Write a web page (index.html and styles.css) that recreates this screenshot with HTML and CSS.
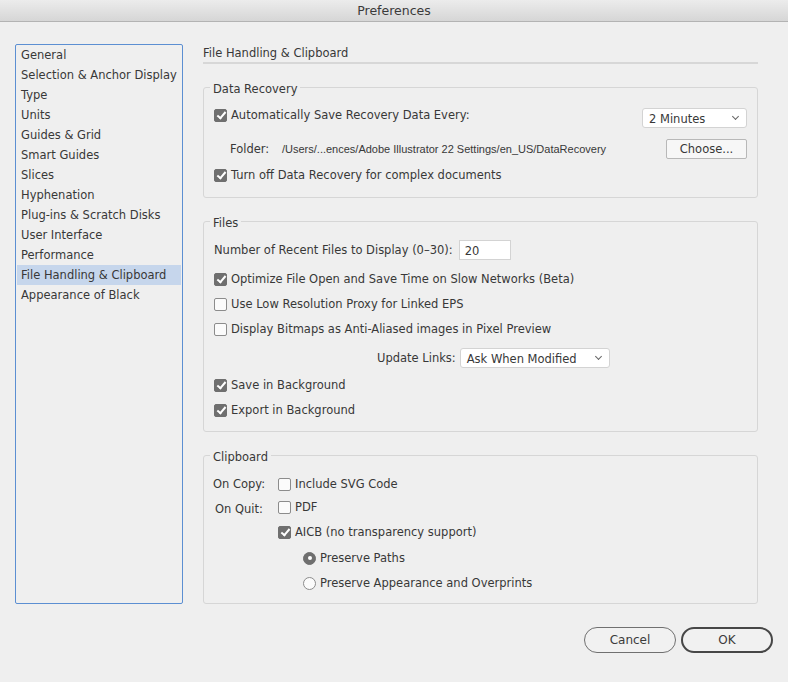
FILE: index.html
```html
<!DOCTYPE html>
<html lang="en">
<head>
    <meta charset="UTF-8">
    <title>Preferences</title>
    <link rel="stylesheet" href="styles.css">
</head>
<body>
    <div class="titlebar">Preferences</div>

    <div class="window">
        <ul class="nav">
            <li>General</li>
            <li>Selection &amp; Anchor Display</li>
            <li>Type</li>
            <li>Units</li>
            <li>Guides &amp; Grid</li>
            <li>Smart Guides</li>
            <li>Slices</li>
            <li>Hyphenation</li>
            <li>Plug-ins &amp; Scratch Disks</li>
            <li>User Interface</li>
            <li>Performance</li>
            <li class="active">File Handling &amp; Clipboard</li>
            <li>Appearance of Black</li>
        </ul>

        <div class="panel">
            <div class="panel-title">File Handling &amp; Clipboard</div>

            <fieldset class="group recovery">
                <legend>Data Recovery</legend>
                <div class="row first">
                    <label class="check"><input type="checkbox" checked><span>Automatically Save Recovery Data Every:</span></label>
                    <div class="select minutes">2 Minutes<span class="chevron"></span></div>
                </div>
                <div class="row folder">
                    <span class="folder-label">Folder:</span>
                    <span class="path">/Users/...ences/Adobe Illustrator 22 Settings/en_US/DataRecovery</span>
                    <button class="btn-square">Choose...</button>
                </div>
                <div class="row">
                    <label class="check"><input type="checkbox" checked><span>Turn off Data Recovery for complex documents</span></label>
                </div>
            </fieldset>

            <fieldset class="group files">
                <legend>Files</legend>
                <div class="row recent">
                    <span>Number of Recent Files to Display (0–30):</span>
                    <div class="field">20</div>
                </div>
                <div class="row">
                    <label class="check"><input type="checkbox" checked><span>Optimize File Open and Save Time on Slow Networks (Beta)</span></label>
                </div>
                <div class="row">
                    <label class="check"><input type="checkbox"><span>Use Low Resolution Proxy for Linked EPS</span></label>
                </div>
                <div class="row">
                    <label class="check"><input type="checkbox"><span>Display Bitmaps as Anti-Aliased images in Pixel Preview</span></label>
                </div>
                <div class="row links">
                    <span>Update Links:</span>
                    <div class="select modified">Ask When Modified<span class="chevron"></span></div>
                </div>
                <div class="row after-links">
                    <label class="check"><input type="checkbox" checked><span>Save in Background</span></label>
                </div>
                <div class="row">
                    <label class="check"><input type="checkbox" checked><span>Export in Background</span></label>
                </div>
            </fieldset>

            <fieldset class="group clipboard">
                <legend>Clipboard</legend>
                <div class="clip-grid">
                    <span class="clip-label">On Copy:</span>
                    <label class="check"><input type="checkbox"><span>Include SVG Code</span></label>

                    <span class="clip-label quit">On Quit:</span>
                    <label class="check"><input type="checkbox"><span>PDF</span></label>

                    <label class="check opt"><input type="checkbox" checked><span>AICB (no transparency support)</span></label>
                    <label class="check opt radio-row"><input type="radio" name="aicb" checked><span>Preserve Paths</span></label>
                    <label class="check opt radio-row"><input type="radio" name="aicb"><span>Preserve Appearance and Overprints</span></label>
                </div>
            </fieldset>
        </div>
    </div>

    <div class="footer">
        <button class="pill">Cancel</button>
        <button class="pill ok">OK</button>
    </div>
</body>
</html>
```

FILE: styles.css
```css
body, html {
    margin: 0;
    padding: 0;
    height: 100%;
    overflow: hidden;
    background: #efefef;
    color: #383838;
    font-family: "DejaVu Sans", sans-serif;
    font-size: 11.5px;
}
.titlebar {
    height: 22px;
    line-height: 22px;
    text-align: center;
    font-size: 12.5px;
    color: #3a3a3a;
    background: linear-gradient(#ececec, #d6d6d6);
    border-bottom: 1px solid #b3b3b3;
    box-sizing: border-box;
}
.window {
    display: flex;
    padding: 22px 30px 0 15px;
}

/* sidebar */
.nav {
    list-style: none;
    margin: 0;
    padding: 0;
    width: 168px;
    height: 560px;
    box-sizing: border-box;
    border: 1px solid #5c8fd2;
    border-radius: 2px;
    flex-shrink: 0;
}
.nav li {
    height: 20px;
    line-height: 21px;
    margin: 0 1px;
    padding-left: 4px;
    white-space: nowrap;
}
.nav li.active {
    background: #c6d6ec;
}

/* right panel */
.panel {
    flex: 1;
    margin-left: 20px;
    display: flex;
    flex-direction: column;
    gap: 14px;
}
.panel-title {
    height: 18px;
    line-height: 19px;
    border-bottom: 2px solid #d7d7d7;
}
.group {
    margin: 0;
    padding: 5px 10px 12px 10px;
    border: 1px solid #d6d6d6;
    border-radius: 3px;
    min-width: 0;
}
.group legend {
    padding: 3px 3px 0;
    margin-left: -4px;
    line-height: 16px;
}
.row {
    display: flex;
    align-items: center;
    height: 20px;
    margin-top: 5px;
}
.row:first-of-type { margin-top: 0; }

.check {
    display: flex;
    align-items: center;
    gap: 4px;
    white-space: nowrap;
}
.check input {
    appearance: none;
    -webkit-appearance: none;
    margin: 0;
    width: 13px;
    height: 13px;
    border: 1px solid #8c8c8c;
    border-radius: 2px;
    background: #fbfbfb;
    position: relative;
    flex-shrink: 0;
}
.check input:checked {
    background: #6f6f6f;
    border-color: #6f6f6f;
}
.check input[type=checkbox]:checked::after {
    content: "";
    position: absolute;
    left: 3.5px;
    top: 0.5px;
    width: 3px;
    height: 7px;
    border: solid #fff;
    border-width: 0 2px 2px 0;
    transform: rotate(40deg);
}
.check input[type=radio] {
    border-radius: 50%;
}
.check input[type=radio]:checked::after {
    content: "";
    position: absolute;
    left: 3.5px;
    top: 3.5px;
    width: 4px;
    height: 4px;
    border-radius: 50%;
    background: #fff;
}

.select {
    position: relative;
    height: 20px;
    line-height: 20px;
    box-sizing: border-box;
    border: 1px solid #d3d3d3;
    border-radius: 3px;
    background: #fff;
    padding-left: 6px;
}
.chevron {
    position: absolute;
    right: 8px;
    top: 5px;
    width: 4px;
    height: 4px;
    border: solid #666;
    border-width: 0 1px 1px 0;
    transform: rotate(45deg);
}

/* data recovery */
.recovery .first {
    height: 26px;
    justify-content: space-between;
}
.recovery .first .check { align-self: flex-start; margin-top: 6px; }
.minutes {
    width: 105px;
    align-self: flex-end;
}
.folder {
    margin-top: 11px;
}
.folder-label {
    margin-left: 16px;
    width: 52px;
}
.path {
    font-family: "Liberation Sans", sans-serif;
    font-size: 11px;
    flex: 1;
    white-space: nowrap;
}
.btn-square {
    font: inherit;
    color: inherit;
    width: 81px;
    height: 20px;
    padding: 0;
    border: 1px solid #b8b8b8;
    border-radius: 2px;
    background: #f7f7f7;
}
.recovery .row:last-child { margin-top: 6px; }

/* files */
.files { padding-top: 9px; padding-bottom: 11px; }
.recent .field {
    margin-left: 6px;
    width: 52px;
    height: 20px;
    line-height: 20px;
    box-sizing: border-box;
    border: 1px solid #d3d3d3;
    background: #fff;
    padding-left: 5px;
}
.recent + .row { margin-top: 9px; }
.links {
    margin-top: 9px;
    padding-left: 163px;
    gap: 4px;
}
.modified { width: 150px; }
.after-links { margin-top: 7px; }

/* clipboard */
.clipboard { padding-top: 9px; padding-bottom: 10px; }
.clip-grid {
    display: grid;
    grid-template-columns: 56px 1fr;
    column-gap: 11px;
    margin-left: -3px;
}
.clip-grid > * {
    height: 20px;
    margin-top: 5px;
}
.clip-grid > :nth-child(-n+2) { margin-top: 0; }
.clip-grid > :nth-child(3),
.clip-grid > :nth-child(4) { margin-top: 3px; }
.clip-label {
    text-align: center;
    line-height: 21px;
}
.clip-label.quit { line-height: 24px; }
.opt { grid-column: 2; }
.radio-row { padding-left: 25px; margin-top: 6px; }
.radio-row:last-child { margin-top: 5px; }

/* footer */
.footer {
    display: flex;
    justify-content: flex-end;
    gap: 5px;
    padding: 23px 15px 0 0;
}
.pill {
    font: inherit;
    font-size: 12px;
    color: #3b3b3b;
    width: 92px;
    height: 26px;
    padding: 0;
    border: 1px solid #707070;
    border-radius: 13px;
    background: #f1f1f1;
}
.pill.ok {
    border: 2px solid #474747;
}
```
